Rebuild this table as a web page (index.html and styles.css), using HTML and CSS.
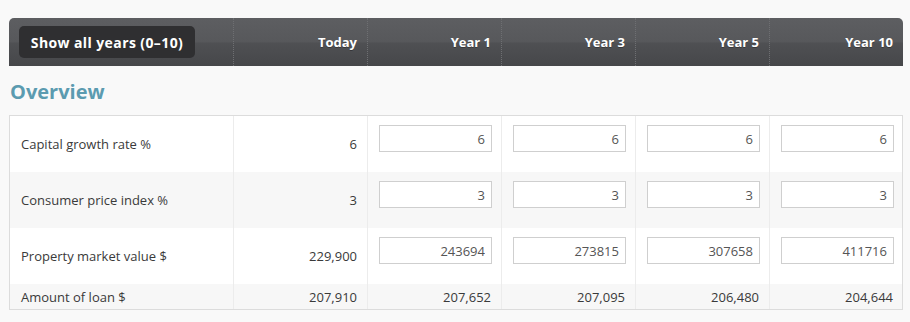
FILE: index.html
```html
<!DOCTYPE html>
<html>
<head>
<meta charset="utf-8">
<link rel="stylesheet" href="styles.css">
</head>
<body>
<div class="page">
  <div class="head">
    <div class="hcell hfirst"><button class="btn">Show all years (0–10)</button></div>
    <div class="hcell">Today</div>
    <div class="hcell">Year 1</div>
    <div class="hcell">Year 3</div>
    <div class="hcell">Year 5</div>
    <div class="hcell">Year 10</div>
  </div>
  <h2 class="title">Overview</h2>
  <div class="table">
    <div class="row">
      <div class="cell label">Capital growth rate %</div>
      <div class="cell num">6</div>
      <div class="cell inp"><input class="field" value="6"></div>
      <div class="cell inp"><input class="field" value="6"></div>
      <div class="cell inp"><input class="field" value="6"></div>
      <div class="cell inp"><input class="field" value="6"></div>
    </div>
    <div class="row alt">
      <div class="cell label">Consumer price index %</div>
      <div class="cell num">3</div>
      <div class="cell inp"><input class="field" value="3"></div>
      <div class="cell inp"><input class="field" value="3"></div>
      <div class="cell inp"><input class="field" value="3"></div>
      <div class="cell inp"><input class="field" value="3"></div>
    </div>
    <div class="row">
      <div class="cell label">Property market value $</div>
      <div class="cell num">229,900</div>
      <div class="cell inp"><input class="field" value="243694"></div>
      <div class="cell inp"><input class="field" value="273815"></div>
      <div class="cell inp"><input class="field" value="307658"></div>
      <div class="cell inp"><input class="field" value="411716"></div>
    </div>
    <div class="row alt short">
      <div class="cell label">Amount of loan $</div>
      <div class="cell num">207,910</div>
      <div class="cell num">207,652</div>
      <div class="cell num">207,095</div>
      <div class="cell num">206,480</div>
      <div class="cell num">204,644</div>
    </div>
  </div>
</div>
</body>
</html>
```
FILE: styles.css
```css
html, body {
  margin: 0;
  padding: 0;
  background: #f9f9f9;
}
body {
  font-family: "Open Sans", "Liberation Sans", sans-serif;
  color: #333;
}
.page {
  padding: 18px 0 0 9px;
  width: 894px;
}
.head {
  display: grid;
  grid-template-columns: 224px repeat(5, 134px);
  height: 48px;
  border-radius: 5px 5px 0 0;
  background: linear-gradient(to bottom, #5d5e61 0%, #57585b 50%, #4f5053 52%, #46474a 100%);
}
.hcell {
  display: flex;
  align-items: center;
  justify-content: flex-end;
  padding-right: 10px;
  color: #fff;
  font-weight: 700;
  font-size: 13px;
  border-left: 1px dotted #6e6f72;
  text-shadow: 0 1px 0 rgba(0,0,0,0.3);
}
.hcell.hfirst {
  border-left: none;
  justify-content: flex-start;
  padding-left: 10px;
}
.btn {
  font-family: inherit;
  font-weight: 700;
  font-size: 14px;
  letter-spacing: 0.4px;
  color: #fff;
  background: #2f2f31;
  border: none;
  border-radius: 5px;
  height: 32px;
  width: 176px;
  padding: 0;
  cursor: pointer;
}
.title {
  margin: 0;
  padding: 14px 0 0 1px;
  height: 49px;
  box-sizing: border-box;
  color: #5b9bb0;
  font-size: 20px;
  font-weight: 700;
  line-height: 24px;
}
.table {
  border: 1px solid #dcdcdc;
  width: 892px;
  background: #fff;
}
.row {
  display: grid;
  grid-template-columns: 223px repeat(5, 134px);
  height: 56px;
  background: #fff;
}
.row.alt {
  background: #f7f7f7;
}
.row.short {
  height: 25px;
}
.cell {
  border-left: 1px solid #ececec;
  font-size: 13px;
  color: #3a3a3a;
  display: flex;
  align-items: center;
}
.cell.label {
  border-left: none;
  padding-left: 11px;
}
.cell.num {
  justify-content: flex-end;
  padding-right: 10px;
}
.cell.inp {
  align-items: flex-start;
  padding: 9px 10px 0 11px;
}
.field {
  width: 113px;
  height: 27px;
  box-sizing: border-box;
  border: 1px solid #cfcfcf;
  background: #fff;
  text-align: right;
  padding: 0 6px 0 4px;
  font-family: inherit;
  font-size: 13px;
  color: #555;
  outline: none;
}
```
